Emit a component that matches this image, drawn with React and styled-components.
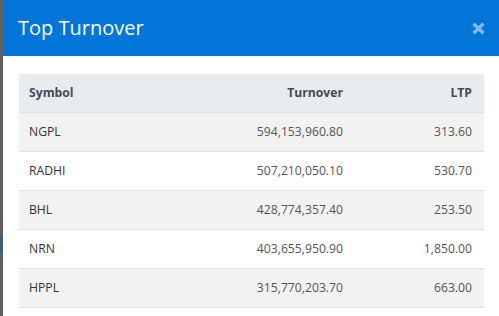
import React from 'react';
import styled, { createGlobalStyle } from 'styled-components';

const rows = [
  { symbol: 'NGPL', turnover: '594,153,960.80', ltp: '313.60' },
  { symbol: 'RADHI', turnover: '507,210,050.10', ltp: '530.70' },
  { symbol: 'BHL', turnover: '428,774,357.40', ltp: '253.50' },
  { symbol: 'NRN', turnover: '403,655,950.90', ltp: '1,850.00' },
  { symbol: 'HPPL', turnover: '315,770,203.70', ltp: '663.00' },
];

const GlobalStyle = createGlobalStyle`
  html, body {
    margin: 0;
    padding: 0;
    background: #ffffff;
    overflow: hidden;
  }
  body {
    font-family: "Open Sans", "Noto Sans", sans-serif;
  }
`;

const Page = styled.div`
  display: flex;
  width: 499px;
  height: 316px;
  overflow: hidden;
`;

const Backdrop = styled.div`
  flex: 0 0 3px;
  background: linear-gradient(
    to bottom,
    #5f5f5f 0,
    #5f5f5f 236px,
    #3d5d78 236px,
    #3d5d78 254px,
    #5f5f5f 254px
  );
`;

const Modal = styled.div`
  flex: 1;
  display: flex;
  flex-direction: column;
  background: #ffffff;
`;

const Header = styled.div`
  display: flex;
  align-items: center;
  justify-content: space-between;
  height: 56px;
  padding: 0 13px 0 15px;
  background: #0275d8;
  box-sizing: border-box;
`;

const Title = styled.h4`
  margin: 0;
  font-size: 20px;
  font-weight: 400;
  color: #ffffff;
  padding-bottom: 1px;
`;

const CloseButton = styled.button`
  display: flex;
  padding: 0;
  border: 0;
  background: transparent;
  cursor: pointer;
  margin-top: 1px;
`;

const Body = styled.div`
  padding: 18px 12px 0 16px;
`;

const Table = styled.table`
  width: 465px;
  border-collapse: collapse;
  table-layout: fixed;
  font-size: 12.2px;
  line-height: 18px;
`;

const HeadCell = styled.th`
  background: #e9ecef;
  color: #444b52;
  font-weight: 700;
  text-align: ${p => (p.$right ? 'right' : 'left')};
  padding: 10px ${p => (p.$right ? '12px' : '10px')} 10px 10px;
  height: 38px;
  box-sizing: border-box;
`;

const Row = styled.tr`
  background: ${p => (p.$striped ? '#f2f2f2' : '#ffffff')};
  border-top: 1px solid #dee2e6;
  &:last-child {
    border-bottom: 1px solid #dee2e6;
  }
`;

const Cell = styled.td`
  color: ${p => (p.$right ? '#555555' : '#333333')};
  text-align: ${p => (p.$right ? 'right' : 'left')};
  padding: 10px ${p => (p.$right ? '12px' : '10px')} 10px 10px;
  height: 39px;
  box-sizing: border-box;
`;

const CloseIcon = () => (
  <svg width="15" height="13" viewBox="0 0 15 13">
    <path
      d="M2.5 1.8 L12.5 11.2 M12.5 1.8 L2.5 11.2"
      stroke="#82b8ea"
      strokeWidth="3.4"
      strokeLinecap="butt"
    />
  </svg>
);

export default function App() {
  return (
    <Page>
      <GlobalStyle />
      <Backdrop />
      <Modal>
        <Header>
          <Title>Top Turnover</Title>
          <CloseButton type="button" aria-label="Close">
            <CloseIcon />
          </CloseButton>
        </Header>
        <Body>
          <Table>
            <colgroup>
              <col style={{ width: '200px' }} />
              <col style={{ width: '136px' }} />
              <col style={{ width: '129px' }} />
            </colgroup>
            <thead>
              <tr>
                <HeadCell>Symbol</HeadCell>
                <HeadCell $right>Turnover</HeadCell>
                <HeadCell $right>LTP</HeadCell>
              </tr>
            </thead>
            <tbody>
              {rows.map((r, i) => (
                <Row key={r.symbol} $striped={i % 2 === 0}>
                  <Cell>{r.symbol}</Cell>
                  <Cell $right>{r.turnover}</Cell>
                  <Cell $right>{r.ltp}</Cell>
                </Row>
              ))}
            </tbody>
          </Table>
        </Body>
      </Modal>
    </Page>
  );
}
